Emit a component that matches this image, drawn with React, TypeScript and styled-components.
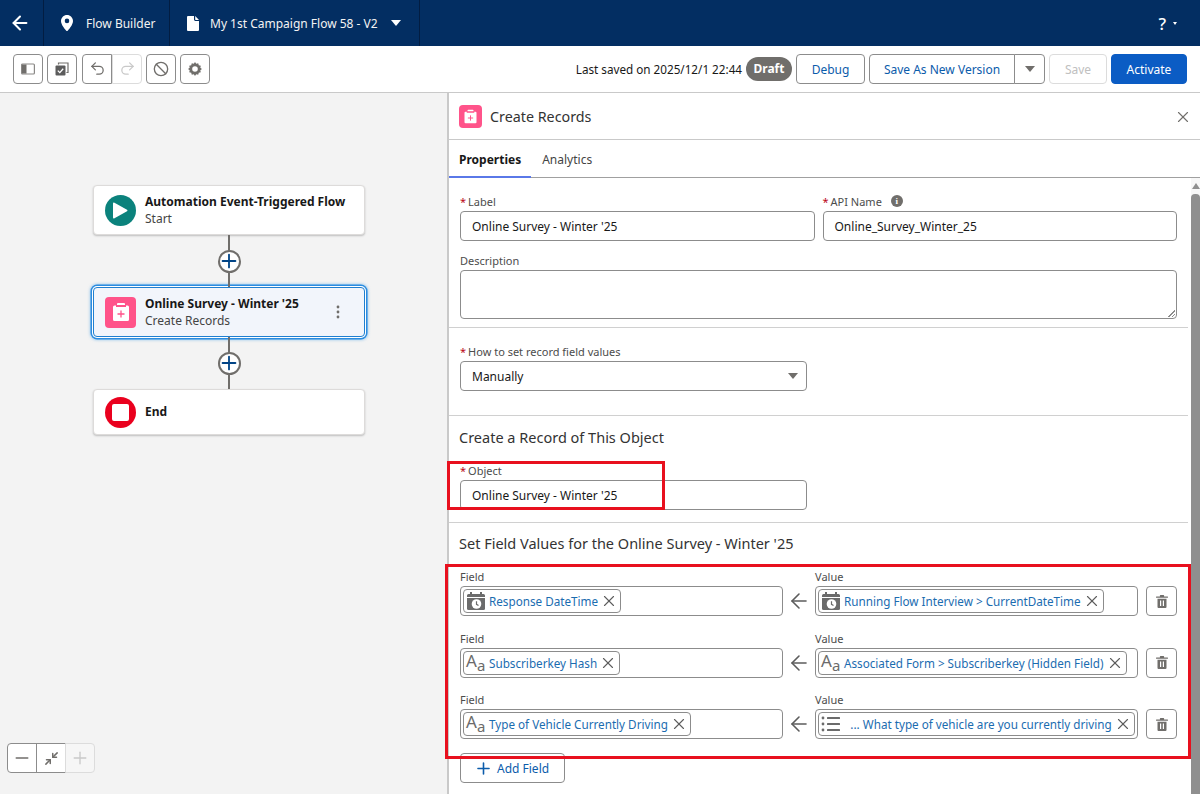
import React, { FC, ReactNode } from 'react'
import styled, { createGlobalStyle } from 'styled-components'
import { ArrowLeft, Ban, Minimize2, Minus, Plus, Redo2, Undo2, X } from 'lucide-react'

const GlobalStyle = createGlobalStyle`
  html, body {
    margin: 0;
    padding: 0;
    background: #fff;
  }
  body {
    font-family: 'Noto Sans', 'Open Sans', sans-serif;
    font-size: 12px;
    color: #181818;
  }
  * {
    box-sizing: border-box;
  }
`

const Page = styled.div`
  width: 1200px;
  height: 794px;
  overflow: hidden;
  display: flex;
  flex-direction: column;
`

const Header = styled.header`
  height: 46px;
  flex: none;
  display: flex;
  align-items: stretch;
  background: #032e62;
  color: #fff;
`

const HeaderTab = styled.div<{ $width: number; $pad?: number }>`
  width: ${({ $width }) => $width}px;
  padding-left: ${({ $pad = 0 }) => $pad}px;
  display: flex;
  align-items: center;
  border-right: 1px solid #021d42;
  font-size: 12px;
  color: #f3f3f3;
`

const HeaderIcon = styled.span<{ $gap?: number; $left?: number }>`
  display: flex;
  margin-left: ${({ $left = 0 }) => $left}px;
  margin-right: ${({ $gap = 0 }) => $gap}px;
`

const Caret = styled.span<{ $size?: number; $color?: string }>`
  display: inline-block;
  width: 0;
  height: 0;
  border-left: ${({ $size = 5 }) => $size}px solid transparent;
  border-right: ${({ $size = 5 }) => $size}px solid transparent;
  border-top: ${({ $size = 5 }) => $size + 1}px solid ${({ $color = '#fff' }) => $color};
`

const HelpArea = styled.div`
  margin-left: auto;
  padding-right: 23px;
  display: flex;
  align-items: center;
  gap: 7px;
  font-size: 17px;
  font-weight: 500;
`

const Toolbar = styled.div`
  height: 47px;
  flex: none;
  padding: 0 13px 1px;
  display: flex;
  align-items: center;
  background: #fff;
  border-bottom: 1px solid #c9c9c9;
`

const IconGroup = styled.div`
  display: flex;
  gap: 4px;
`

const IconButton = styled.div<{ $joined?: 'left' | 'right'; $disabled?: boolean }>`
  width: 30px;
  height: 30px;
  display: flex;
  align-items: center;
  justify-content: center;
  background: #fff;
  color: ${({ $disabled }) => ($disabled ? '#c9c9c9' : '#706e6b')};
  border: 1px solid ${({ $disabled }) => ($disabled ? '#dcdcdc' : '#8c8c8c')};
  border-radius: ${({ $joined }) =>
    $joined === 'left' ? '4px 0 0 4px' : $joined === 'right' ? '0 4px 4px 0' : '4px'};
  margin-left: ${({ $joined }) =>
    $joined === 'right' ? '-4px' : $joined === 'left' ? '1px' : '0'};
`

const ToolbarRight = styled.div`
  margin-left: auto;
  display: flex;
  align-items: center;
`

const SavedText = styled.span`
  font-size: 11.7px;
  color: #181818;
  margin-right: 4px;
`

const DraftPill = styled.span`
  width: 46px;
  height: 24px;
  display: flex;
  align-items: center;
  justify-content: center;
  border-radius: 12px;
  background: #706e6b;
  color: #fff;
  font-size: 12px;
  font-weight: 700;
`

const Button = styled.div<{ $width: number; $variant?: 'brand' | 'disabled'; $group?: 'left' | 'right' }>`
  width: ${({ $width }) => $width}px;
  height: 30px;
  padding-top: 1px;
  display: flex;
  align-items: center;
  justify-content: center;
  font-size: 12px;
  background: ${({ $variant }) => ($variant === 'brand' ? '#0b5cc4' : '#fff')};
  color: ${({ $variant }) =>
    $variant === 'brand' ? '#fff' : $variant === 'disabled' ? '#c0c0c0' : '#0b5cab'};
  border: 1px solid
    ${({ $variant }) =>
      $variant === 'brand' ? '#0b5cc4' : $variant === 'disabled' ? '#dcdcdc' : '#8c8c8c'};
  border-radius: ${({ $group }) =>
    $group === 'left' ? '4px 0 0 4px' : $group === 'right' ? '0 4px 4px 0' : '4px'};
  margin-left: ${({ $group }) => ($group === 'right' ? '-1px' : '4px')};
`

const Workspace = styled.div`
  flex: 1;
  min-height: 0;
  display: flex;
`

const Canvas = styled.section`
  width: 447px;
  flex: none;
  position: relative;
  padding: 92px 0 0 93px;
  background: #f3f3f3;
`

const NodeColumn = styled.div`
  width: 272px;
  display: flex;
  flex-direction: column;
`

const NodeCard = styled.div<{ $height: number; $selected?: boolean }>`
  height: ${({ $height }) => $height}px;
  padding: 0 11px;
  display: flex;
  align-items: center;
  gap: 9px;
  border-radius: 4px;
  background: ${({ $selected }) => ($selected ? '#f2f5fb' : '#fff')};
  border: 1px solid ${({ $selected }) => ($selected ? '#1f7fd0' : '#dddbda')};
  box-shadow: ${({ $selected }) =>
    $selected
      ? '0 0 0 1px #fff, 0 0 0 2.5px #2b8ce0, 0 0 3px 3px rgba(74, 163, 230, 0.55)'
      : '0 1px 2px rgba(0, 0, 0, 0.22)'};
`

const NodeText = styled.div<{ $lift?: boolean }>`
  flex: 1;
  min-width: 0;
  line-height: 17px;
  margin-bottom: ${({ $lift }) => ($lift ? '2px' : '0')};
`

const NodeTitle = styled.div`
  font-weight: 700;
  font-size: 12px;
  color: #181818;
`

const NodeSub = styled.div`
  font-size: 12px;
  color: #444;
`

const NodeMenu = styled.span`
  display: flex;
  margin-right: 13px;
`

const RoundIcon = styled.div<{ $color: string }>`
  width: 31px;
  height: 31px;
  flex: none;
  display: flex;
  align-items: center;
  justify-content: center;
  border-radius: 50%;
  background: ${({ $color }) => $color};
`

const PinkIcon = styled.div<{ $size: number }>`
  width: ${({ $size }) => $size}px;
  height: ${({ $size }) => $size}px;
  flex: none;
  display: flex;
  align-items: center;
  justify-content: center;
  border-radius: 4px;
  background: #ff538a;
`

const EndSquare = styled.span`
  width: 17px;
  height: 17px;
  border-radius: 2px;
  background: #fff;
`

const Connector = styled.div`
  position: relative;
  height: 52px;
  display: flex;
  align-items: center;
  justify-content: center;
  &::before {
    content: '';
    position: absolute;
    top: 0;
    bottom: 0;
    left: 135px;
    width: 2px;
    background: #706e6b;
  }
`

const AddCircle = styled.div`
  position: relative;
  width: 23px;
  height: 23px;
  display: flex;
  align-items: center;
  justify-content: center;
  border-radius: 50%;
  background: #fff;
  border: 2px solid #706e6b;
  color: #014486;
  svg {
    flex: none;
  }
`

const ZoomControls = styled.div`
  position: absolute;
  left: 7px;
  bottom: 21px;
  display: flex;
`

const ZoomButton = styled.div<{ $pos: 'first' | 'mid' | 'last' }>`
  width: 30px;
  height: 30px;
  margin-left: ${({ $pos }) => ($pos === 'first' ? '0' : '-1px')};
  display: flex;
  align-items: center;
  justify-content: center;
  background: ${({ $pos }) => ($pos === 'last' ? '#f6f6f6' : '#fff')};
  color: ${({ $pos }) => ($pos === 'last' ? '#c9c9c9' : '#706e6b')};
  border: 1px solid ${({ $pos }) => ($pos === 'last' ? '#dcdcdc' : '#8c8c8c')};
  border-radius: ${({ $pos }) =>
    $pos === 'first' ? '4px 0 0 4px' : $pos === 'last' ? '0 4px 4px 0' : '0'};
`

const Panel = styled.aside`
  flex: 1;
  min-width: 0;
  display: flex;
  flex-direction: column;
  border-left: 2px solid #c9c9c9;
  background: #fff;
`

const PanelHeader = styled.div`
  height: 47px;
  flex: none;
  padding: 0 8px 0 10px;
  display: flex;
  align-items: center;
  gap: 8px;
  border-bottom: 1px solid #c9c9c9;
  font-size: 14.3px;
  color: #333;
`

const CloseButton = styled.span`
  margin-left: auto;
  margin-top: 2px;
  display: flex;
  color: #706e6b;
`

const Tabs = styled.div`
  height: 38px;
  flex: none;
  display: flex;
  gap: 1px;
  border-bottom: 1px solid #a0a0a0;
`

const Tab = styled.div<{ $active?: boolean }>`
  height: 38px;
  padding: 2px 10px 0;
  display: flex;
  align-items: center;
  font-size: 12px;
  font-weight: ${({ $active }) => ($active ? 700 : 400)};
  color: ${({ $active }) => ($active ? '#181818' : '#444')};
  border-bottom: 2px solid ${({ $active }) => ($active ? '#5a78e8' : 'transparent')};
`

const PanelBody = styled.div`
  flex: 1;
  min-height: 0;
  display: flex;
`

const PanelContent = styled.div`
  flex: 1;
  min-width: 0;
`

const Scrollbar = styled.div`
  width: 9px;
  flex: none;
  display: flex;
  flex-direction: column;
  align-items: center;
  padding-top: 5px;
  gap: 5px;
  background: #f7f7f7;
`

const ScrollThumb = styled.div`
  width: 9px;
  flex: 1;
  border-radius: 4px 4px 0 0;
  background: #8f8f8f;
`

const ScrollArrow = styled.span`
  width: 0;
  height: 0;
  border-left: 4px solid transparent;
  border-right: 4px solid transparent;
  border-bottom: 6px solid #8f8f8f;
`

const Section = styled.div<{ $top: number; $bottom: number; $last?: boolean }>`
  position: relative;
  margin-right: 3px;
  padding: ${({ $top, $bottom }) => `${$top}px 11px ${$bottom}px 11px`};
  border-bottom: ${({ $last }) => ($last ? 'none' : '1px solid #d0d0d0')};
`

const Heading = styled.h3`
  margin: 0 0 14px -1px;
  height: 20px;
  line-height: 19px;
  font-size: 14.5px;
  font-weight: 400;
  color: #333;
`

const TwoCols = styled.div`
  display: flex;
  gap: 8px;
`

const FieldGroup = styled.div<{ $width?: number; $top?: number }>`
  flex: ${({ $width }) => ($width ? 'none' : 1)};
  width: ${({ $width }) => ($width ? `${$width}px` : 'auto')};
  margin-top: ${({ $top = 0 }) => $top}px;
`

const Label = styled.label`
  height: 18px;
  display: flex;
  align-items: flex-start;
  line-height: 17px;
  font-size: 11px;
  color: #4c4c4c;
`

const Required = styled.span`
  color: #ba0517;
  margin-right: 2px;
`

const InfoBadge = styled.span`
  width: 12px;
  height: 12px;
  margin: 2px 0 0 9px;
  display: flex;
  align-items: center;
  justify-content: center;
  border-radius: 50%;
  background: #706e6b;
  color: #fff;
  font-size: 9px;
  font-weight: 700;
  font-family: 'Liberation Serif', serif;
`

const Input = styled.div<{ $height?: number }>`
  height: ${({ $height = 30 }) => $height}px;
  padding: 0 8px 0 11px;
  display: flex;
  align-items: center;
  justify-content: space-between;
  font-size: 12px;
  color: #181818;
  background: #fff;
  border: 1px solid #8c8c8c;
  border-radius: 4px;
`

const TextArea = styled(Input)`
  position: relative;
  &::after {
    content: '';
    position: absolute;
    right: 1px;
    bottom: 1px;
    width: 7px;
    height: 7px;
    background: linear-gradient(135deg, transparent 50%, #8c8c8c 50%, #8c8c8c 60%, transparent 60%, transparent 75%, #8c8c8c 75%, #8c8c8c 85%, transparent 85%);
  }
`

const FieldRows = styled.div`
  position: relative;
  display: flex;
  flex-direction: column;
  gap: 13.5px;
`

const FieldRow = styled.div`
  display: flex;
  align-items: flex-end;
`

const PillBox = styled.div<{ $width: number }>`
  width: ${({ $width }) => $width}px;
  flex: none;
  height: 30px;
  padding: 2px;
  display: flex;
  align-items: stretch;
  background: #fff;
  border: 1px solid #8c8c8c;
  border-radius: 4px;
`

const Chip = styled.div<{ $fill?: boolean }>`
  ${({ $fill }) => ($fill ? 'flex: 1;' : '')}
  padding: 0 2px;
  display: flex;
  align-items: center;
  justify-content: ${({ $fill }) => ($fill ? 'space-between' : 'flex-start')};
  border: 1px solid #8c8c8c;
  border-radius: 4px;
  background: #fff;
`

const ChipLabel = styled.span<{ $inset?: number }>`
  margin: 0 2px 0 ${({ $inset = 3 }) => $inset}px;
  font-size: 11.7px;
  white-space: nowrap;
  color: #1b6cb0;
`

const ChipClose = styled.span`
  display: flex;
  color: #5c5c5c;
`

const TextIcon = styled.span`
  width: 20px;
  height: 20px;
  display: flex;
  align-items: flex-start;
  color: #6b6b6b;
  line-height: 1;
`

const TextIconBig = styled.span`
  font-size: 17px;
  line-height: 16px;
`

const TextIconSmall = styled.span`
  margin-top: 5px;
  font-size: 15px;
  line-height: 15px;
`

const RowArrow = styled.span`
  width: 32px;
  height: 30px;
  flex: none;
  display: flex;
  align-items: center;
  justify-content: center;
  color: #5c5c5c;
`

const TrashButton = styled.div`
  width: 31px;
  height: 30px;
  margin-left: 8px;
  flex: none;
  display: flex;
  align-items: center;
  justify-content: center;
  color: #706e6b;
  background: #fff;
  border: 1px solid #8c8c8c;
  border-radius: 4px;
`

const AddButton = styled.div`
  width: 105px;
  height: 30px;
  margin-top: 14px;
  padding-left: 13px;
  display: flex;
  align-items: center;
  gap: 4px;
  font-size: 12px;
  color: #0b5cab;
  background: #fff;
  border: 1px solid #8c8c8c;
  border-radius: 4px;
`

const Highlight = styled.div<{ $top: number; $left: number; $width: number; $height: number }>`
  position: absolute;
  top: ${({ $top }) => $top}px;
  left: ${({ $left }) => $left}px;
  width: ${({ $width }) => $width}px;
  height: ${({ $height }) => $height}px;
  border: 3px solid #e8101e;
  pointer-events: none;
  z-index: 1;
`

const PinIcon: FC = () => (
  <svg width="12" height="16" viewBox="0 0 12 16">
    <path
      fill="#fff"
      fillRule="evenodd"
      d="M6 0C2.7 0 0 2.7 0 6c0 4 4.6 9 5.6 9.9.2.2.6.2.8 0C7.4 15 12 10 12 6c0-3.300-2.700-6-6-6zm0 8.200A2.300 2.300 0 1 1 6 3.600a2.300 2.300 0 0 1 0 4.600z"
    />
  </svg>
)

const DocIcon: FC = () => (
  <svg width="12" height="15" viewBox="0 0 12 15">
    <path fill="#fff" d="M1 0h6v3.600c0 .8.600 1.400 1.400 1.400H12v9a1 1 0 0 1-1 1H1a1 1 0 0 1-1-1V1a1 1 0 0 1 1-1z" />
    <path fill="#fff" d="M8.200 0 12 3.900H8.600a.4.4 0 0 1-.4-.4z" />
  </svg>
)

const PanelToggleIcon: FC = () => (
  <svg width="14" height="12" viewBox="0 0 14 12">
    <rect x="0.600" y="1" width="12.800" height="10" rx="1" fill="none" stroke="#8a8886" strokeWidth="1.200" />
    <rect x="1" y="1.500" width="4.500" height="9" fill="#706e6b" />
  </svg>
)

const CopyCheckIcon: FC = () => (
  <svg width="14" height="14" viewBox="0 0 14 14">
    <path d="M3.500 2.500V1h9.500v9.500h-1.600" fill="none" stroke="#706e6b" strokeWidth="1.200" />
    <rect x="0.500" y="3.500" width="10" height="10" rx="1" fill="#5c5c5c" />
    <path d="M2.800 8.600l2 2 3.400-3.800" fill="none" stroke="#fff" strokeWidth="1.300" />
  </svg>
)

const GearIcon: FC = () => (
  <svg width="14" height="14" viewBox="0 0 14 14">
    <path
      fill="#706e6b"
      fillRule="evenodd"
      d="M7 0l1.200 1.700 2-.5.600 2 2 .6-.5 2L14 7l-1.700 1.200.5 2-2 .6-.6 2-2-.5L7 14l-1.200-1.700-2 .5-.6-2-2-.6.5-2L0 7l1.700-1.200-.5-2 2-.6.6-2 2 .5zm0 4.200a2.800 2.800 0 1 0 0 5.600 2.800 2.800 0 0 0 0-5.600z"
    />
  </svg>
)

const ClipboardIcon: FC<{ size: number }> = ({ size }) => (
  <svg width={size} height={size} viewBox="0 0 20 20">
    <path fill="#fff" d="M7 1h6a1 1 0 0 1 1 1v1H6V2a1 1 0 0 1 1-1z" />
    <path
      fill="#fff"
      d="M3.500 3.500H5V5h10V3.500h1.500A1.500 1.500 0 0 1 18 5v12.500a1.500 1.500 0 0 1-1.500 1.500h-13A1.500 1.500 0 0 1 2 17.500V5a1.500 1.500 0 0 1 1.500-1.500z"
    />
    <path d="M10 8.500v7M6.500 12h7" stroke="#ff538a" strokeWidth="1.300" fill="none" />
  </svg>
)

const PlayIcon: FC = () => (
  <svg width="15" height="17" viewBox="0 0 15 17">
    <path fill="#fff" d="M1.500 0.700 14 7.800a.8.8 0 0 1 0 1.400L1.500 16.300A1 1 0 0 1 0 15.500v-14a1 1 0 0 1 1.500-.8z" />
  </svg>
)

const KebabIcon: FC = () => (
  <svg width="4" height="14" viewBox="0 0 4 14">
    <circle cx="2" cy="2" r="1.400" fill="#706e6b" />
    <circle cx="2" cy="7" r="1.400" fill="#706e6b" />
    <circle cx="2" cy="12" r="1.400" fill="#706e6b" />
  </svg>
)

const DateTimeIcon: FC = () => (
  <svg width="20" height="20" viewBox="0 0 20 20">
    <path fill="#6b6b6b" d="M4 1h2v2h8V1h2v2h1.500A1.500 1.500 0 0 1 19 4.500V6H1V4.500A1.500 1.500 0 0 1 2.500 3H4z" />
    <path fill="#6b6b6b" d="M1 7h18v10.500a1.500 1.500 0 0 1-1.500 1.500h-15A1.500 1.500 0 0 1 1 17.500z" />
    <circle cx="10.500" cy="13" r="4.800" fill="#fff" />
    <path d="M10.500 10.200V13.300l2 1.200" stroke="#6b6b6b" strokeWidth="1.200" fill="none" />
  </svg>
)

const ListIcon: FC = () => (
  <svg width="20" height="18" viewBox="0 0 20 18">
    <g fill="#6b6b6b">
      <circle cx="2" cy="3" r="1.400" />
      <circle cx="2" cy="9" r="1.400" />
      <circle cx="2" cy="15" r="1.400" />
      <rect x="6" y="2" width="13" height="2" rx="0.500" />
      <rect x="6" y="8" width="13" height="2" rx="0.500" />
      <rect x="6" y="14" width="13" height="2" rx="0.500" />
    </g>
  </svg>
)

const TrashIcon: FC = () => (
  <svg width="12" height="13" viewBox="0 0 12 13">
    <path fill="#706e6b" d="M4.500 0h3a.6.6 0 0 1 .6.6V1.500H11.400a.6.6 0 0 1 0 1.300H.6a.6.6 0 0 1 0-1.300h3.300V.6A.6.6 0 0 1 4.500 0z" />
    <path
      fill="#706e6b"
      fillRule="evenodd"
      d="M1.500 3.800h9V12a1 1 0 0 1-1 1h-7a1 1 0 0 1-1-1zM4 5.500v5.500h1.200V5.500zm2.800 0v5.500H8V5.500z"
    />
  </svg>
)

const AaIcon: FC = () => (
  <TextIcon>
    <TextIconBig>A</TextIconBig>
    <TextIconSmall>a</TextIconSmall>
  </TextIcon>
)

type RowData = {
  field: string
  fieldIcon: ReactNode
  value: string
  valueIcon: ReactNode
  valueInset?: number
  fillValue?: boolean
}

const rows: RowData[] = [
  {
    field: 'Response DateTime',
    fieldIcon: <DateTimeIcon />,
    value: 'Running Flow Interview > CurrentDateTime',
    valueIcon: <DateTimeIcon />,
  },
  {
    field: 'Subscriberkey Hash',
    fieldIcon: <AaIcon />,
    value: 'Associated Form > Subscriberkey (Hidden Field)',
    valueIcon: <AaIcon />,
  },
  {
    field: 'Type of Vehicle Currently Driving',
    fieldIcon: <AaIcon />,
    value: '... What type of vehicle are you currently driving',
    valueIcon: <ListIcon />,
    valueInset: 9,
    fillValue: true,
  },
]

const App: FC = () => (
  <Page>
    <GlobalStyle />
    <Header>
      <HeaderTab $width={44} $pad={9}>
        <ArrowLeft size={22} strokeWidth={2.2} color="#fff" />
      </HeaderTab>
      <HeaderTab $width={126} $pad={17}>
        <HeaderIcon $gap={13}>
          <PinIcon />
        </HeaderIcon>
        Flow Builder
      </HeaderTab>
      <HeaderTab $width={250} $pad={17}>
        <HeaderIcon $gap={11}>
          <DocIcon />
        </HeaderIcon>
        My 1st Campaign Flow 58 - V2
        <HeaderIcon $left={13}>
          <Caret />
        </HeaderIcon>
      </HeaderTab>
      <HelpArea>
        ?
        <Caret $size={2.5} />
      </HelpArea>
    </Header>

    <Toolbar>
      <IconGroup>
        <IconButton>
          <PanelToggleIcon />
        </IconButton>
        <IconButton>
          <CopyCheckIcon />
        </IconButton>
        <IconButton $joined="left">
          <Undo2 size={17} strokeWidth={1.8} />
        </IconButton>
        <IconButton $joined="right" $disabled>
          <Redo2 size={17} strokeWidth={1.8} />
        </IconButton>
        <IconButton>
          <Ban size={16} strokeWidth={2} />
        </IconButton>
        <IconButton>
          <GearIcon />
        </IconButton>
      </IconGroup>
      <ToolbarRight>
        <SavedText>Last saved on 2025/12/1 22:44</SavedText>
        <DraftPill>Draft</DraftPill>
        <Button $width={69}>Debug</Button>
        <Button $width={146} $group="left">
          Save As New Version
        </Button>
        <Button $width={31} $group="right">
          <Caret $color="#706e6b" />
        </Button>
        <Button $width={58} $variant="disabled">
          Save
        </Button>
        <Button $width={76} $variant="brand">
          Activate
        </Button>
      </ToolbarRight>
    </Toolbar>

    <Workspace>
      <Canvas>
        <NodeColumn>
          <NodeCard $height={50}>
            <RoundIcon $color="#0b827c">
              <PlayIcon />
            </RoundIcon>
            <NodeText>
              <NodeTitle>Automation Event-Triggered Flow</NodeTitle>
              <NodeSub>Start</NodeSub>
            </NodeText>
          </NodeCard>
          <Connector>
            <AddCircle>
              <Plus size={22} strokeWidth={2} />
            </AddCircle>
          </Connector>
          <NodeCard $height={50} $selected>
            <PinkIcon $size={31}>
              <ClipboardIcon size={20} />
            </PinkIcon>
            <NodeText>
              <NodeTitle>Online Survey - Winter '25</NodeTitle>
              <NodeSub>Create Records</NodeSub>
            </NodeText>
            <NodeMenu>
              <KebabIcon />
            </NodeMenu>
          </NodeCard>
          <Connector>
            <AddCircle>
              <Plus size={22} strokeWidth={2} />
            </AddCircle>
          </Connector>
          <NodeCard $height={46}>
            <RoundIcon $color="#ea001e">
              <EndSquare />
            </RoundIcon>
            <NodeText $lift>
              <NodeTitle>End</NodeTitle>
            </NodeText>
          </NodeCard>
        </NodeColumn>
        <ZoomControls>
          <ZoomButton $pos="first">
            <Minus size={20} strokeWidth={1.6} />
          </ZoomButton>
          <ZoomButton $pos="mid">
            <Minimize2 size={15} strokeWidth={2.4} />
          </ZoomButton>
          <ZoomButton $pos="last">
            <Plus size={20} strokeWidth={1.6} />
          </ZoomButton>
        </ZoomControls>
      </Canvas>

      <Panel>
        <PanelHeader>
          <PinkIcon $size={23}>
            <ClipboardIcon size={15} />
          </PinkIcon>
          Create Records
          <CloseButton>
            <X size={18} strokeWidth={1.5} />
          </CloseButton>
        </PanelHeader>
        <Tabs>
          <Tab $active>Properties</Tab>
          <Tab>Analytics</Tab>
        </Tabs>
        <PanelBody>
          <PanelContent>
            <Section $top={15} $bottom={8}>
              <TwoCols>
                <FieldGroup>
                  <Label>
                    <Required>*</Required>Label
                  </Label>
                  <Input>Online Survey - Winter '25</Input>
                </FieldGroup>
                <FieldGroup>
                  <Label>
                    <Required>*</Required>API Name
                    <InfoBadge>i</InfoBadge>
                  </Label>
                  <Input>Online_Survey_Winter_25</Input>
                </FieldGroup>
              </TwoCols>
              <FieldGroup $top={11}>
                <Label>Description</Label>
                <TextArea $height={49} />
              </FieldGroup>
            </Section>

            <Section $top={15} $bottom={24}>
              <FieldGroup $width={347}>
                <Label>
                  <Required>*</Required>How to set record field values
                </Label>
                <Input>
                  Manually
                  <Caret $color="#706e6b" />
                </Input>
              </FieldGroup>
            </Section>

            <Section $top={12} $bottom={12}>
              <Heading>Create a Record of This Object</Heading>
              <FieldGroup $width={347}>
                <Label>
                  <Required>*</Required>Object
                </Label>
                <Input>Online Survey - Winter '25</Input>
              </FieldGroup>
              <Highlight $top={45} $left={-2} $width={218} $height={49} />
            </Section>

            <Section $top={11} $bottom={0} $last>
              <Heading>Set Field Values for the Online Survey - Winter '25</Heading>
              <FieldRows>
                {rows.map((row) => (
                  <FieldRow key={row.field}>
                    <FieldGroup $width={323}>
                      <Label>Field</Label>
                      <PillBox $width={323}>
                        <Chip>
                          {row.fieldIcon}
                          <ChipLabel>{row.field}</ChipLabel>
                          <ChipClose>
                            <X size={18} strokeWidth={1.5} />
                          </ChipClose>
                        </Chip>
                      </PillBox>
                    </FieldGroup>
                    <RowArrow>
                      <ArrowLeft size={24} strokeWidth={1.6} />
                    </RowArrow>
                    <FieldGroup $width={323}>
                      <Label>Value</Label>
                      <PillBox $width={323}>
                        <Chip $fill={row.fillValue}>
                          {row.valueIcon}
                          <ChipLabel $inset={row.valueInset}>{row.value}</ChipLabel>
                          <ChipClose>
                            <X size={18} strokeWidth={1.5} />
                          </ChipClose>
                        </Chip>
                      </PillBox>
                    </FieldGroup>
                    <TrashButton>
                      <TrashIcon />
                    </TrashButton>
                  </FieldRow>
                ))}
                <Highlight $top={-4} $left={-15} $width={746} $height={195} />
              </FieldRows>
              <AddButton>
                <Plus size={19} />
                Add Field
              </AddButton>
            </Section>
          </PanelContent>
          <Scrollbar>
            <ScrollArrow />
            <ScrollThumb />
          </Scrollbar>
        </PanelBody>
      </Panel>
    </Workspace>
  </Page>
)

export default App
